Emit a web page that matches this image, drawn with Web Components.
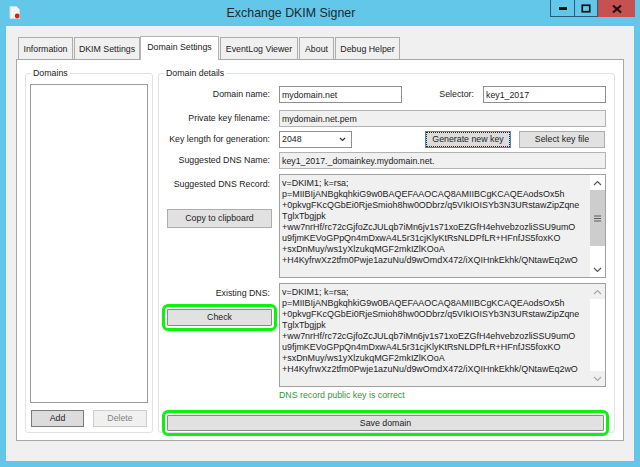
<!DOCTYPE html>
<html><head><meta charset="utf-8"><style>
html,body{margin:0;padding:0;width:640px;height:467px;overflow:hidden;background:#63c7ea}
body{font:8.8px/11px "Liberation Sans",Arial,sans-serif;color:#222}
</style></head><body>
<dkim-window></dkim-window>
<script>
function def(name,css,html,init){
  customElements.define(name,class extends HTMLElement{
    constructor(){super();const s=this.attachShadow({mode:'open'});s.innerHTML='<style>'+css+'</style>'+html;}
    connectedCallback(){if(init)init(this);}
  });
}
const DKIM=`v=DKIM1; k=rsa;
p=MIIBIjANBgkqhkiG9w0BAQEFAAOCAQ8AMIIBCgKCAQEAodsOx5h
+0pkvgFKcQGbEi0RjeSmioh8hw0ODbrz/q5VIkIOISYb3N3URstawZipZqne
TglxTbgjpk
+ww7nrHf/rc72cGjfoZcJULqb7iMn6jv1s71xoEZGfH4ehvebzozliSSU9umO
u9fjmKEVoGPpQn4mDxwA4L5r31cjKlyKtRsNLDPfLR+HFnfJS5foxKO
+sxDnMuy/ws1yXlzukqMGF2mkIZlKOoA
+H4KyfrwXz2tfm0Pwje1azuNu/d9wOmdX472/iXQIHnkEkhk/QNtawEq2wO`;

def('win-button',`
:host{display:flex;box-sizing:border-box;align-items:center;justify-content:center;height:17px;border:1px solid #2c5a75;border-top:0;border-left-width:1px;color:#111}
:host([kind=close]){background:#c75050;border:0}
svg{display:block}`,`<slot></slot>`);

def('title-bar',`
:host{display:flex;height:26px;box-sizing:border-box;position:relative}
.icon{margin:6px 0 0 9px;width:12px;height:13px}
.t{flex:1;text-align:center;font:12.4px/26px "Liberation Sans",sans-serif;color:#1d2a30;padding-top:0;padding-left:11px;height:26px}
.b{display:flex;height:17px;margin-right:5px}
win-button:nth-child(1){width:25px}
win-button:nth-child(2){width:23px;border-left:0}
win-button:nth-child(3){width:37px}
`,`<svg class="icon" viewBox="0 0 12 13"><path d="M1 .5H7.5L10.5 3.5V12.5H1Z" fill="#f4f4f4" stroke="#d8d8d8"/><circle cx="8.2" cy="10" r="2.4" fill="#d8201c"/></svg>
<div class="t">Exchange DKIM Signer</div>
<div class="b">
<win-button><svg width="10" height="4"><rect x="1" y="1" width="8" height="3" fill="#111"/></svg></win-button>
<win-button><svg width="10" height="9"><rect x="1.25" y="1.25" width="7.5" height="6.5" fill="none" stroke="#111" stroke-width="1.7"/></svg></win-button>
<win-button kind="close"><svg width="12" height="10"><path d="M2 1.5 10 8.5M10 1.5 2 8.5" stroke="#1b0f0f" stroke-width="2.2"/></svg></win-button>
</div>`);

def('tab-item',`
:host{display:block;box-sizing:border-box;height:22px;margin-top:1px;margin-right:1px;border:1px solid #adadad;border-bottom:0;background:#f0f0f0;text-align:center;line-height:22px;white-space:nowrap;font-size:8.8px}
:host([active]){height:24px;margin-top:0;margin-left:-1px;margin-right:0;background:#fff;line-height:20px;position:relative;z-index:1;margin-bottom:-1px;border-color:#b4b4b4}`,`<slot></slot>`);

def('tab-strip',`:host{display:flex;height:23px;padding:10px 0 0 12px;box-sizing:content-box}`,`<slot></slot>`);

def('group-box',`
:host{display:block;box-sizing:border-box;position:relative;border:1px solid #dfe3e6;border-radius:3px;background:#fff}
.l{position:absolute;left:5px;top:-6px;background:#fff;padding:0 2px;line-height:11px}
`,`<div class="l"></div><slot></slot>`,el=>{el.shadowRoot.querySelector('.l').textContent=el.getAttribute('label')});

def('win-btn',`
:host{display:flex;box-sizing:border-box;align-items:center;justify-content:center;background:#e1e1e1;border:1px solid #adadad;height:17px;white-space:nowrap;color:#222}
:host([default]){border-color:#7a7a7a;background:#dcdcdc}
:host([disabled]){background:#f0f0f0;border-color:#cfcfcf;color:#838383}
:host([focus]){border:1px solid #3f8fc4;background:#dcdcdc;outline:1px dotted #222;outline-offset:-2px}
:host([glow]){outline:3px solid #0bf20b;outline-offset:2px;border-radius:1px;border-color:#8a8a8a}`,`<slot></slot>`);

def('text-field',`
:host{display:block;box-sizing:border-box;height:17px;border:1px solid #8f8f8f;background:#fff;padding:0 2px;line-height:16px;white-space:nowrap;overflow:hidden;color:#222}
:host([readonly]){background:#f0f0f0;border-color:#b2b2b2}`,`<slot></slot>`);

def('combo-box',`
:host{display:flex;box-sizing:border-box;height:17px;border:1px solid #8f8f8f;background:#fff;padding:0 2px;line-height:15px;justify-content:space-between;align-items:center}
svg{margin-right:3px}`,`<slot></slot><svg width="7" height="5"><path d="M1 1 3.5 3.5 6 1" fill="none" stroke="#333" stroke-width="1.2"/></svg>`);

def('scroll-bar',`
:host{display:flex;flex-direction:column;box-sizing:border-box;width:15px;background:#fff;flex:none}
.a{height:15px;display:flex;align-items:center;justify-content:center;background:#fff;flex:none}
.track{flex:1;display:flex;flex-direction:column}
.thumb{height:56px;background:#cdcdcd;display:flex;align-items:center;justify-content:center}
:host([flat]) .thumb{display:none}
:host([flat]) .a{background:#f0f0f0}
:host([flat]) svg path{stroke:#a8a8a8}
`,`<div class="a"><svg width="9" height="6"><path d="M1 5 4.5 1.5 8 5" fill="none" stroke="#555" stroke-width="1.2"/></svg></div>
<div class="track"><div class="thumb"><svg width="7" height="7"><path d="M0 1H7M0 3.5H7M0 6H7" stroke="#5a5a5a"/></svg></div></div>
<div class="a"><svg width="9" height="6"><path d="M1 1 4.5 4.5 8 1" fill="none" stroke="#555" stroke-width="1.2"/></svg></div>`);

def('dkim-record',`
:host{display:flex;box-sizing:border-box;height:104px;border:1px solid #a0a0a0;background:#f0f0f0;padding-right:0}
pre{flex:1;margin:0;padding:3px 0 0 2px;font:inherit;line-height:11px;font-size:8.95px;color:#222;overflow:hidden;white-space:pre}
`,`<pre></pre><scroll-bar></scroll-bar>`,el=>{el.shadowRoot.querySelector('pre').textContent=DKIM;if(el.hasAttribute('flat'))el.shadowRoot.querySelector('scroll-bar').setAttribute('flat','')});

def('domains-pane',`
:host{display:flex;flex-direction:column;width:128px;flex:none}
group-box{flex:1;display:flex;flex-direction:column;padding:10px 4px 5px 4px}
.list{flex:1;box-sizing:border-box;border:1px solid #9a9a9a;background:#fff;display:block}
.row{display:flex;justify-content:space-between;padding:7px 1px 0 1px}
win-btn{width:53px}
win-btn[disabled]{width:54px}
`,`<group-box label="Domains" style="flex:1"><div class="list"></div><div class="row"><win-btn default>Add</win-btn><win-btn disabled>Delete</win-btn></div></group-box>`);

def('details-pane',`
:host{display:block;flex:1;min-width:0}
group-box{height:100%;padding:12px 9px 0 8px}
.g{display:grid;grid-template-columns:105px 327px;column-gap:7px}
.lab{text-align:right;white-space:nowrap;padding-right:2px;line-height:16px}
.row1{display:flex;align-items:flex-start}
.row1 .sel{width:81px;text-align:right;padding-right:9px;box-sizing:border-box;line-height:16px}
.row1 text-field{width:123px}
.row3{display:flex}
.row3 combo-box{width:73px;margin-right:73px}
.row3 win-btn{width:86px}
.row3 win-btn+win-btn{margin-left:8px}
.m7{margin-top:7px}.m4{margin-top:4px}.m5{margin-top:5px}
.side{display:flex;flex-direction:column}
.side .lab{margin-top:2px}
.side win-btn{margin-top:17px;height:19px;margin-right:-2px;width:105px;margin-left:0}
.side.e win-btn{height:17px;margin-top:8px}
.ok{color:#1f9a3c;line-height:11px;margin-top:3px;grid-column:2}
.save{grid-column:1/3;margin-top:14px;width:437px;height:16px;margin-left:0}
.l0{grid-column:1}
`,`<group-box label="Domain details"><div class="g">
<div class="lab">Domain name:</div>
<div class="row1"><text-field>mydomain.net</text-field><div class="sel">Selector:</div><text-field>key1_2017</text-field></div>
<div class="lab m7">Private key filename:</div><text-field class="m7" readonly>mydomain.net.pem</text-field>
<div class="lab m4">Key length for generation:</div>
<div class="row3 m4"><combo-box>2048</combo-box><win-btn focus>Generate new key</win-btn><win-btn>Select key file</win-btn></div>
<div class="lab m4">Suggested DNS Name:</div><text-field class="m4" readonly>key1_2017._domainkey.mydomain.net.</text-field>
<div class="side m5"><div class="lab">Suggested DNS Record:</div><win-btn>Copy to clipboard</win-btn></div>
<dkim-record class="m5"></dkim-record>
<div class="side e m5"><div class="lab">Existing DNS:</div><win-btn glow>Check</win-btn></div>
<dkim-record class="m5" flat></dkim-record>
<div class="ok">DNS record public key is correct</div>
<win-btn class="save" glow>Save domain</win-btn>
</div></group-box>`);

def('tab-panel',`
:host{display:flex;gap:5px;box-sizing:border-box;height:382px;margin:0 10px 0 10px;border:1px solid #a8a8a8;border-width:1px 1px 1px 1px;background:#fff;padding:13px 8px 7px 8px}`,`<slot></slot>`);

def('dkim-window',`
:host{display:block;width:640px;height:467px;box-sizing:border-box;padding:0 6px 6px 6px;background:#63c7ea}
title-bar{margin:0 -6px}
.client{background:#f0f0f0;height:435px;box-sizing:border-box;display:block}
`,`<title-bar></title-bar>
<div class="client">
<tab-strip>
<tab-item style="width:55px">Information</tab-item>
<tab-item style="width:66px">DKIM Settings</tab-item>
<tab-item active style="width:79px">Domain Settings</tab-item>
<tab-item style="width:78px;margin-left:1px">EventLog Viewer</tab-item>
<tab-item style="width:35px">About</tab-item>
<tab-item style="width:65px">Debug Helper</tab-item>
</tab-strip>
<tab-panel><domains-pane></domains-pane><details-pane></details-pane></tab-panel>
</div>`);
</script></body></html>
